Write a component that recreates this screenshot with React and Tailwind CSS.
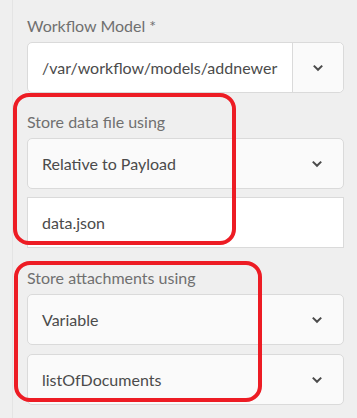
import React from 'react';

function Chevron() {
  return (
    <svg width="12" height="8" viewBox="0 0 12 8" className="text-[#4b4b4b]">
      <path d="M1.8 1.6 L6 5.8 L10.2 1.6" fill="none" stroke="currentColor" strokeWidth="2" />
    </svg>
  );
}

function Label({ children }) {
  return <div className="text-[16px] leading-[20px] text-[#707070] mb-[6px]">{children}</div>;
}

function Select({ value }) {
  return (
    <div className="h-[51px] flex items-center justify-between bg-[#fafafa] border border-[#dadada] rounded-[5px] pl-[14px] pr-[20px]">
      <span className="text-[16px] text-[#4b4b4b]">{value}</span>
      <Chevron />
    </div>
  );
}

export default function App() {
  return (
    <div
      className="relative w-[357px] h-[418px] bg-[#efefef] flex overflow-hidden"
      style={{ fontFamily: 'Lato, "Open Sans", sans-serif' }}
    >
      <div className="w-[13px] border-r border-[#e4e4e4] shrink-0" />

      <div className="flex-1 pl-[14px] pr-[13px] pt-[16px]">
        {/* Workflow model */}
        <Label>Workflow Model *</Label>
        <div className="h-[51px] flex bg-white border border-[#dadada] rounded-[5px]">
          <div className="flex-1 flex items-center pl-[14px] text-[16px] text-[#4b4b4b] overflow-hidden whitespace-nowrap">
            /var/workflow/models/addnewer
          </div>
          <div className="w-[51px] flex items-center justify-center bg-[#fafafa] border-l border-[#dadada] rounded-r-[5px]">
            <Chevron />
          </div>
        </div>

        {/* Data file */}
        <div className="mt-[19px]">
          <Label>Store data file using</Label>
          <Select value="Relative to Payload" />
          <div className="mt-[8px] h-[51px] flex items-center bg-white border border-[#dadada] pl-[14px] text-[16px] text-[#4b4b4b]">
            data.json
          </div>
        </div>

        {/* Attachments */}
        <div className="mt-[20px]">
          <Label>Store attachments using</Label>
          <Select value="Variable" />
          <div className="mt-[9px]">
            <Select value="listOfDocuments" />
          </div>
        </div>
      </div>

      {/* annotation boxes */}
      <div className="absolute left-[13px] top-[93px] w-[223px] h-[152px] border-[4px] border-[#ed1c24] rounded-[16px]" />
      <div className="absolute left-[14px] top-[261px] w-[248px] h-[141px] border-[4px] border-[#ed1c24] rounded-[16px]" />
    </div>
  );
}
